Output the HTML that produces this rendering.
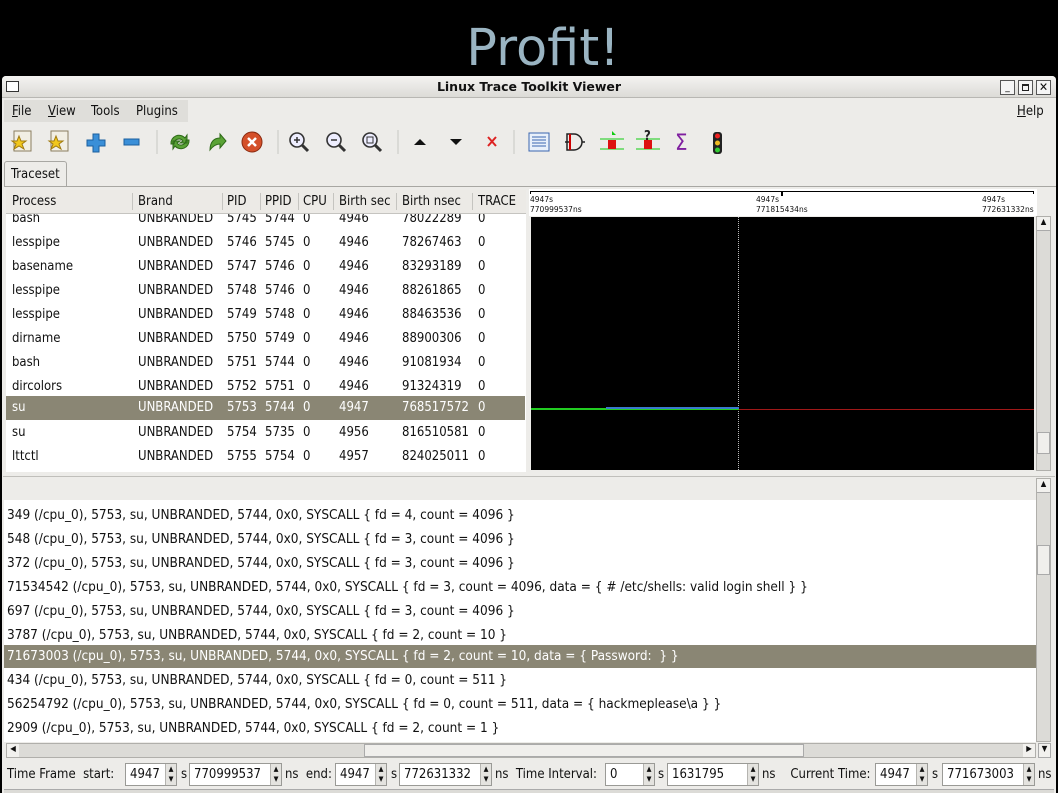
<!DOCTYPE html><html><head><style>
*{margin:0;padding:0;box-sizing:border-box}
body{width:1058px;height:793px;background:#000;position:relative;overflow:hidden;font-family:"DejaVu Sans Condensed","DejaVu Sans","Liberation Sans",sans-serif;font-size:13px;color:#111}
.a{position:absolute}
.row{position:absolute;left:0;height:24px;line-height:24px;white-space:nowrap}
.c{position:absolute}
.ev{position:absolute;left:7px;white-space:nowrap;height:24px;line-height:24px}
.spin{position:absolute;top:763px;height:23px;background:#fff;border:1px solid #9a9a96;line-height:21px;padding-left:4px}
.sb{position:absolute;top:0;right:0;width:11px;height:21px;background:#e4e3df;border-left:1px solid #b5b4b0;font-size:7px;line-height:10px;text-align:center}
.lab{position:absolute;top:763px;line-height:23px}
</style></head><body>
<div class="a" style="left:0;top:14px;width:1086px;text-align:center;font-family:'DejaVu Sans','Liberation Sans',sans-serif;font-size:51px;color:#9ab4c2;line-height:70px">Profit!</div>
<div class="a" style="left:2px;top:76px;width:1054px;height:717px;background:#edece9;border-radius:4px 4px 0 0"></div>
<div class="a" style="left:2px;top:76px;width:1054px;height:22px;background:linear-gradient(#f4f3f1,#dcdbd7);border-bottom:1px solid #b8b7b3;border-radius:4px 4px 0 0;text-align:center;font-weight:bold;font-size:12.5px;line-height:22px;font-family:'DejaVu Sans',sans-serif">Linux Trace Toolkit Viewer</div>
<div class="a" style="left:6px;top:81px;width:13px;height:11px;border:1px solid #333;background:#fff"></div>
<div class="a" style="left:1000px;top:80px;width:15px;height:15px;border:1px solid #555;background:#f5f5f5;font-size:10px;line-height:13px;text-align:center">_</div>
<div class="a" style="left:1018px;top:80px;width:15px;height:15px;border:1px solid #555;background:#f5f5f5"><div style="margin:3px;width:7px;height:7px;border:1px solid #222;border-top-width:2px"></div></div>
<div class="a" style="left:1036px;top:80px;width:15px;height:15px;border:1px solid #555;background:#f5f5f5;font-size:12px;line-height:13px;text-align:center">✕</div>
<div class="a" style="left:4px;top:100px;width:184px;height:22px;background:#dfdeda"></div>
<div class="a" style="left:12px;top:101px;line-height:22px"><u>F</u>ile</div>
<div class="a" style="left:48px;top:101px;line-height:22px"><u>V</u>iew</div>
<div class="a" style="left:91px;top:101px;line-height:22px">Tools</div>
<div class="a" style="left:136px;top:101px;line-height:22px">Plugins</div>
<div class="a" style="left:1017px;top:101px;line-height:22px"><u>H</u>elp</div>
<!-- toolbar -->
<svg class="a" style="left:0;top:126px" width="740" height="32">
<g><rect x="14" y="5" width="17" height="20" fill="#f2efe4" stroke="#8a7e60"/><polygon points="19,10 21,15 26,15 22,18 24,23 19,20 14,23 16,18 12,15 17,15" fill="#f2c81c" stroke="#a07a10"/></g>
<g transform="translate(37,0)"><rect x="14" y="5" width="17" height="20" fill="#f2efe4" stroke="#8a7e60"/><polygon points="19,10 21,15 26,15 22,18 24,23 19,20 14,23 16,18 12,15 17,15" fill="#f2c81c" stroke="#a07a10"/></g>
<path d="M93,8h6v6h6v6h-6v6h-6v-6h-6v-6h6z" fill="#3a8fd8" stroke="#1c5f9e"/>
<rect x="124" y="13" width="15" height="6" fill="#3a8fd8" stroke="#1c5f9e"/>
<line x1="157" y1="4" x2="157" y2="28" stroke="#c8c7c3"/>
<path d="M171,18a8,8 0 0 1 14,-6l2,-3v8h-7l3,-2a5,5 0 0 0 -9,3z M189,14a8,8 0 0 1 -14,6l-2,3v-8h7l-3,2a5,5 0 0 0 9,-3z" fill="#5aa336" stroke="#2e6a18"/>
<path d="M210,24c0,-8 4,-12 10,-12v-4l6,7-6,7v-4c-4,0-7,2-10,6z" fill="#5aa336" stroke="#2e6a18"/>
<circle cx="252" cy="16" r="10" fill="#d4502a" stroke="#8a2a10"/><path d="M248,12l8,8M256,12l-8,8" stroke="#fff" stroke-width="2.5"/>
<line x1="278" y1="4" x2="278" y2="28" stroke="#c8c7c3"/>
<g fill="#eef" stroke="#333" stroke-width="1.6"><circle cx="297" cy="14" r="7"/><line x1="302" y1="19" x2="308" y2="25" stroke-width="3"/><circle cx="334" cy="14" r="7"/><line x1="339" y1="19" x2="345" y2="25" stroke-width="3"/><circle cx="370" cy="14" r="7"/><line x1="375" y1="19" x2="381" y2="25" stroke-width="3"/></g>
<path d="M294,14h6M297,11v6M331,14h6" stroke="#333" stroke-width="1.5"/>
<rect x="367" y="11" width="6" height="6" fill="none" stroke="#333"/>
<line x1="398" y1="4" x2="398" y2="28" stroke="#c8c7c3"/>
<polygon points="414,19 420,13 426,19" fill="#111"/><polygon points="450,13 456,19 462,13" fill="#111"/>
<path d="M488,11l8,9M496,11l-8,9" stroke="#d22" stroke-width="2"/>
<line x1="514" y1="4" x2="514" y2="28" stroke="#c8c7c3"/>
<rect x="529" y="7" width="20" height="18" fill="#e8f0fa" stroke="#3a66b0"/><path d="M532,11h14M532,14h14M532,17h14M532,20h14" stroke="#3a66b0"/>
<path d="M567,8h7a8,8 0 0 1 0,16h-7zM570,16h-5M582,16h3" fill="none" stroke="#222" stroke-width="1.5"/><line x1="570" y1="8" x2="570" y2="24" stroke="#c00" stroke-width="2"/>
<path d="M600,23h24M600,13h24" stroke="#1c1"/><rect x="608" y="14" width="8" height="9" fill="#d11"/><polygon points="612,5 616,9 612,9" fill="#1c1"/>
<path d="M636,23h24M636,13h24" stroke="#1c1"/><rect x="644" y="14" width="8" height="9" fill="#d11"/><text x="644" y="14" font-size="13" font-weight="bold" fill="#222">?</text>
<text x="675" y="24" font-size="22" fill="#8020a0">Σ</text>
<rect x="713" y="6" width="9" height="22" rx="3" fill="#222"/><circle cx="717.5" cy="10" r="2.5" fill="#e22"/><circle cx="717.5" cy="17" r="2.5" fill="#eb2"/><circle cx="717.5" cy="24" r="2.5" fill="#3c3"/>
</svg>
<div class="a" style="left:4px;top:161px;width:63px;height:26px;background:#edece9;border:1px solid #a8a7a3;border-bottom:none;border-radius:3px 3px 0 0;line-height:25px;padding-left:6px">Traceset</div>
<div class="a" style="left:4px;top:186px;width:1052px;height:1px;background:#a8a7a3"></div>
<!-- process list -->
<div class="a" style="left:6px;top:190px;width:520px;height:282px;background:#fff;overflow:hidden">
<div class="a" style="left:0;top:0;width:520px;height:24px;background:#eceae6;border-bottom:1px solid #c5c4c0;line-height:24px">
<span class="c" style="left:6px">Process</span><span class="c" style="left:132px">Brand</span><span class="c" style="left:221px">PID</span><span class="c" style="left:259px">PPID</span><span class="c" style="left:297px">CPU</span><span class="c" style="left:333px">Birth sec</span><span class="c" style="left:396px">Birth nsec</span><span class="c" style="left:472px">TRACE</span>
<span class="c" style="left:126px;top:3px;height:17px;border-left:1px solid #c5c4c0"></span><span class="c" style="left:216px;top:3px;height:17px;border-left:1px solid #c5c4c0"></span><span class="c" style="left:254px;top:3px;height:17px;border-left:1px solid #c5c4c0"></span><span class="c" style="left:292px;top:3px;height:17px;border-left:1px solid #c5c4c0"></span><span class="c" style="left:327px;top:3px;height:17px;border-left:1px solid #c5c4c0"></span><span class="c" style="left:390px;top:3px;height:17px;border-left:1px solid #c5c4c0"></span><span class="c" style="left:466px;top:3px;height:17px;border-left:1px solid #c5c4c0"></span>
</div>
</div>
<div class="a" style="left:6px;top:214px;width:520px;height:258px;background:#fff;overflow:hidden;font-size:13px">
<div class="row" style="top:-7px;width:520px"><span class="c" style="left:6px">bash</span><span class="c" style="left:132px">UNBRANDED</span><span class="c" style="left:221px">5745</span><span class="c" style="left:259px">5744</span><span class="c" style="left:297px">0</span><span class="c" style="left:333px">4946</span><span class="c" style="left:396px">78022289</span><span class="c" style="left:472px">0</span></div>
<div class="row" style="top:17px;width:520px"><span class="c" style="left:6px">lesspipe</span><span class="c" style="left:132px">UNBRANDED</span><span class="c" style="left:221px">5746</span><span class="c" style="left:259px">5745</span><span class="c" style="left:297px">0</span><span class="c" style="left:333px">4946</span><span class="c" style="left:396px">78267463</span><span class="c" style="left:472px">0</span></div>
<div class="row" style="top:41px;width:520px"><span class="c" style="left:6px">basename</span><span class="c" style="left:132px">UNBRANDED</span><span class="c" style="left:221px">5747</span><span class="c" style="left:259px">5746</span><span class="c" style="left:297px">0</span><span class="c" style="left:333px">4946</span><span class="c" style="left:396px">83293189</span><span class="c" style="left:472px">0</span></div>
<div class="row" style="top:65px;width:520px"><span class="c" style="left:6px">lesspipe</span><span class="c" style="left:132px">UNBRANDED</span><span class="c" style="left:221px">5748</span><span class="c" style="left:259px">5746</span><span class="c" style="left:297px">0</span><span class="c" style="left:333px">4946</span><span class="c" style="left:396px">88261865</span><span class="c" style="left:472px">0</span></div>
<div class="row" style="top:89px;width:520px"><span class="c" style="left:6px">lesspipe</span><span class="c" style="left:132px">UNBRANDED</span><span class="c" style="left:221px">5749</span><span class="c" style="left:259px">5748</span><span class="c" style="left:297px">0</span><span class="c" style="left:333px">4946</span><span class="c" style="left:396px">88463536</span><span class="c" style="left:472px">0</span></div>
<div class="row" style="top:113px;width:520px"><span class="c" style="left:6px">dirname</span><span class="c" style="left:132px">UNBRANDED</span><span class="c" style="left:221px">5750</span><span class="c" style="left:259px">5749</span><span class="c" style="left:297px">0</span><span class="c" style="left:333px">4946</span><span class="c" style="left:396px">88900306</span><span class="c" style="left:472px">0</span></div>
<div class="row" style="top:137px;width:520px"><span class="c" style="left:6px">bash</span><span class="c" style="left:132px">UNBRANDED</span><span class="c" style="left:221px">5751</span><span class="c" style="left:259px">5744</span><span class="c" style="left:297px">0</span><span class="c" style="left:333px">4946</span><span class="c" style="left:396px">91081934</span><span class="c" style="left:472px">0</span></div>
<div class="row" style="top:161px;width:520px"><span class="c" style="left:6px">dircolors</span><span class="c" style="left:132px">UNBRANDED</span><span class="c" style="left:221px">5752</span><span class="c" style="left:259px">5751</span><span class="c" style="left:297px">0</span><span class="c" style="left:333px">4946</span><span class="c" style="left:396px">91324319</span><span class="c" style="left:472px">0</span></div>
<div class="row" style="top:182px;height:24px;width:519px;background:#8a8674;color:#fff"><span class="c" style="left:6px">su</span><span class="c" style="left:132px">UNBRANDED</span><span class="c" style="left:221px">5753</span><span class="c" style="left:259px">5744</span><span class="c" style="left:297px">0</span><span class="c" style="left:333px">4947</span><span class="c" style="left:396px">768517572</span><span class="c" style="left:472px">0</span></div>
<div class="row" style="top:207px;width:520px"><span class="c" style="left:6px">su</span><span class="c" style="left:132px">UNBRANDED</span><span class="c" style="left:221px">5754</span><span class="c" style="left:259px">5735</span><span class="c" style="left:297px">0</span><span class="c" style="left:333px">4956</span><span class="c" style="left:396px">816510581</span><span class="c" style="left:472px">0</span></div>
<div class="row" style="top:231px;width:520px"><span class="c" style="left:6px">lttctl</span><span class="c" style="left:132px">UNBRANDED</span><span class="c" style="left:221px">5755</span><span class="c" style="left:259px">5754</span><span class="c" style="left:297px">0</span><span class="c" style="left:333px">4957</span><span class="c" style="left:396px">824025011</span><span class="c" style="left:472px">0</span></div>
</div>
<!-- time ruler -->
<div class="a" style="left:529px;top:189px;width:508px;height:27px;background:#fff;font-size:7.5px;font-family:'DejaVu Sans',sans-serif;line-height:10px">
<div class="a" style="left:1px;top:2px;width:504px;height:3px;border:1.5px solid #000;border-bottom:none"></div>
<div class="a" style="left:252px;top:2px;width:2px;height:5px;background:#000"></div>
<div class="a" style="left:1px;top:6px">4947s<br>770999537ns</div>
<div class="a" style="left:227px;top:6px">4947s<br>771815434ns</div>
<div class="a" style="left:453px;top:6px">4947s<br>772631332ns</div>
</div>
<div class="a" style="left:531px;top:217px;width:503px;height:253px;background:#000">
<div class="a" style="left:207px;top:0;width:0;height:253px;border-left:1px dotted #bbb"></div>
<div class="a" style="left:0;top:191px;width:208px;height:2px;background:#2c2"></div>
<div class="a" style="left:75px;top:190px;width:133px;height:2px;background:#3a7acc"></div>
<div class="a" style="left:208px;top:192px;width:295px;height:1px;background:#a01818"></div>
</div>
<div class="a" style="left:1036px;top:216px;width:15px;height:255px;background:#dcdbd7;border:1px solid #b0afab"><div style="height:14px;background:#f2f1ee;border-bottom:1px solid #aaa;font-size:8px;text-align:center">▲</div><div class="a" style="left:0;top:215px;width:13px;height:22px;background:#f0efec;border:1px solid #aaa"></div></div>
<div class="a" style="left:3px;top:476px;width:1052px;height:24px;background:#edece9;border-top:1px solid #c0bfbb"></div>
<!-- events -->
<div class="a" style="left:4px;top:500px;width:1032px;height:242px;background:#fff;overflow:hidden;font-size:13.5px">
<div class="ev" style="left:3px;top:3px">349 (/cpu_0), 5753, su, UNBRANDED, 5744, 0x0, SYSCALL { fd = 4, count = 4096 }</div>
<div class="ev" style="left:3px;top:27px">548 (/cpu_0), 5753, su, UNBRANDED, 5744, 0x0, SYSCALL { fd = 3, count = 4096 }</div>
<div class="ev" style="left:3px;top:51px">372 (/cpu_0), 5753, su, UNBRANDED, 5744, 0x0, SYSCALL { fd = 3, count = 4096 }</div>
<div class="ev" style="left:3px;top:75px">71534542 (/cpu_0), 5753, su, UNBRANDED, 5744, 0x0, SYSCALL { fd = 3, count = 4096, data = { # /etc/shells: valid login shell } }</div>
<div class="ev" style="left:3px;top:99px">697 (/cpu_0), 5753, su, UNBRANDED, 5744, 0x0, SYSCALL { fd = 3, count = 4096 }</div>
<div class="ev" style="left:3px;top:123px">3787 (/cpu_0), 5753, su, UNBRANDED, 5744, 0x0, SYSCALL { fd = 2, count = 10 }</div>
<div class="ev" style="left:0;top:145px;width:1032px;background:#8a8674;color:#fff;padding-left:3px;line-height:23px;height:23px">71673003 (/cpu_0), 5753, su, UNBRANDED, 5744, 0x0, SYSCALL { fd = 2, count = 10, data = { Password:&nbsp; } }</div>
<div class="ev" style="left:3px;top:168px">434 (/cpu_0), 5753, su, UNBRANDED, 5744, 0x0, SYSCALL { fd = 0, count = 511 }</div>
<div class="ev" style="left:3px;top:192px">56254792 (/cpu_0), 5753, su, UNBRANDED, 5744, 0x0, SYSCALL { fd = 0, count = 511, data = { hackmeplease\a } }</div>
<div class="ev" style="left:3px;top:216px">2909 (/cpu_0), 5753, su, UNBRANDED, 5744, 0x0, SYSCALL { fd = 2, count = 1 }</div>
</div>
<div class="a" style="left:1036px;top:478px;width:15px;height:264px;background:#dcdbd7;border:1px solid #b0afab"><div style="height:14px;background:#f2f1ee;border-bottom:1px solid #aaa;font-size:8px;text-align:center">▲</div><div class="a" style="left:0;top:66px;width:13px;height:30px;background:#f0efec;border:1px solid #aaa"></div></div>
<div class="a" style="left:6px;top:743px;width:1030px;height:15px;background:#dcdbd7;border:1px solid #b0afab"><div class="a" style="left:0;top:0;width:12px;height:13px;background:#f2f1ee;font-size:8px;text-align:center">◀</div><div class="a" style="left:357px;top:0;width:440px;height:13px;background:#f0efec;border:1px solid #aaa"></div><div class="a" style="right:0;top:0;width:12px;height:13px;background:#f2f1ee;font-size:8px;text-align:center">▶</div></div>
<div class="a" style="left:1038px;top:743px;width:13px;height:15px;background:#f2f1ee;border:1px solid #aaa;font-size:8px;text-align:center">▼</div>
<!-- time bar -->
<div class="lab" style="left:7px">Time Frame&nbsp; start:</div>
<div class="spin" style="left:125px;width:52px">4947<div class="sb">▲<br>▼</div></div><div class="lab" style="left:181px">s</div>
<div class="spin" style="left:189px;width:93px">770999537<div class="sb">▲<br>▼</div></div><div class="lab" style="left:285px">ns&nbsp; end:</div>
<div class="spin" style="left:335px;width:52px">4947<div class="sb">▲<br>▼</div></div><div class="lab" style="left:391px">s</div>
<div class="spin" style="left:399px;width:93px">772631332<div class="sb">▲<br>▼</div></div><div class="lab" style="left:495px">ns&nbsp; Time Interval:</div>
<div class="spin" style="left:605px;width:50px">0<div class="sb">▲<br>▼</div></div><div class="lab" style="left:658px">s</div>
<div class="spin" style="left:667px;width:92px">1631795<div class="sb">▲<br>▼</div></div><div class="lab" style="left:762px">ns&nbsp;&nbsp;&nbsp; Current Time:</div>
<div class="spin" style="left:875px;width:53px">4947<div class="sb">▲<br>▼</div></div><div class="lab" style="left:932px">s</div>
<div class="spin" style="left:942px;width:93px">771673003<div class="sb">▲<br>▼</div></div><div class="lab" style="left:1038px">ns</div>
<div class="a" style="left:4px;top:789px;width:1050px;height:4px;background:#dcdbd7;border-top:1px solid #aaa"></div>
</body></html>
